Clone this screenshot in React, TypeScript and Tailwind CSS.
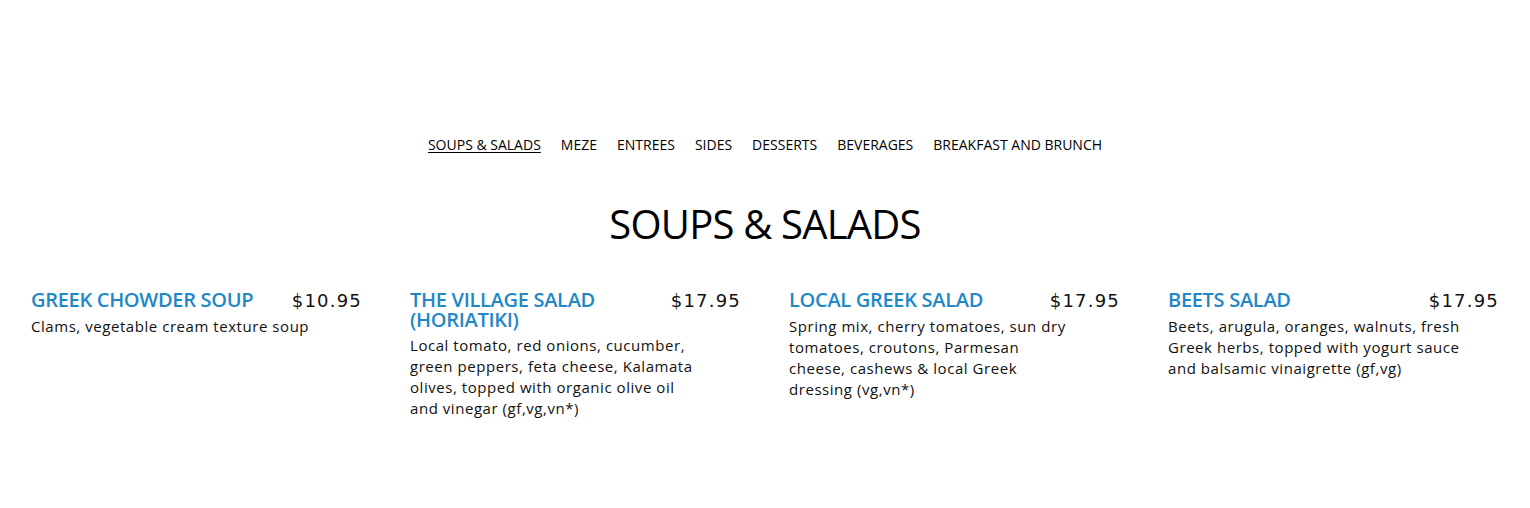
const items = [
  {
    name: "GREEK CHOWDER SOUP",
    price: "$10.95",
    desc: ["Clams, vegetable cream texture soup"],
  },
  {
    name: "THE VILLAGE SALAD (HORIATIKI)",
    price: "$17.95",
    desc: [
      "Local tomato, red onions, cucumber,",
      "green peppers, feta cheese, Kalamata",
      "olives, topped with organic olive oil",
      "and vinegar (gf,vg,vn*)",
    ],
  },
  {
    name: "LOCAL GREEK SALAD",
    price: "$17.95",
    desc: [
      "Spring mix, cherry tomatoes, sun dry",
      "tomatoes, croutons, Parmesan",
      "cheese, cashews & local Greek",
      "dressing (vg,vn*)",
    ],
  },
  {
    name: "BEETS SALAD",
    price: "$17.95",
    desc: [
      "Beets, arugula, oranges, walnuts, fresh",
      "Greek herbs, topped with yogurt sauce",
      "and balsamic vinaigrette (gf,vg)",
    ],
  },
];

const tabs = ["SOUPS & SALADS", "MEZE", "ENTREES", "SIDES", "DESSERTS", "BEVERAGES", "BREAKFAST AND BRUNCH"];

export default function App() {
  return (
    <div className="h-[508px] bg-white pt-[135px] text-black font-['Open_Sans',sans-serif]">
      <nav className="flex justify-center gap-5 text-[14px] leading-5">
        {tabs.map((t, i) => (
          <a key={t} href="#" className={i === 0 ? "underline underline-offset-2" : ""}>
            {t}
          </a>
        ))}
      </nav>

      <h2 className="mt-[45px] text-center text-[40px] leading-[48px] tracking-[-0.8px]">SOUPS &amp; SALADS</h2>

      <div className="mt-[42px] grid grid-cols-4 gap-x-12 px-[31px]">
        {items.map((it) => (
          <div key={it.name}>
            <div className="flex items-start justify-between gap-4">
              <h3 className="max-w-[250px] text-[20px] font-semibold leading-5 tracking-[-0.3px] text-[#1e88c8]">{it.name}</h3>
              <span className="pt-[1px] text-[18px] leading-5 tracking-[1.2px] text-[#111] font-['DejaVu_Sans',sans-serif]">{it.price}</span>
            </div>
            <p className="mt-[5px] text-[15px] leading-[21px] tracking-[0.55px] text-[#111]">
              {it.desc.map((line, i) => (
                <span key={i} className="block whitespace-nowrap">
                  {line}
                </span>
              ))}
            </p>
          </div>
        ))}
      </div>
    </div>
  );
}
